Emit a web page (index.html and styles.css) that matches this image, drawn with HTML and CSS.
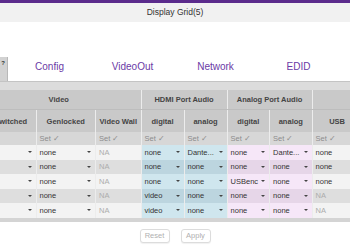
FILE: index.html
```html
<!DOCTYPE html>
<html>
<head>
<meta charset="utf-8">
<link rel="stylesheet" href="styles.css">
</head>
<body>
<div class="topbar"></div>
<div class="titlebar">Display Grid(5)</div>
<div class="gap"></div>
<nav class="tabs">
  <div class="tab active"><span class="q">?</span></div>
  <div class="tab">Config</div>
  <div class="tab">VideoOut</div>
  <div class="tab">Network</div>
  <div class="tab">EDID</div>
</nav>
<div class="tabline"></div>
<div class="grid-wrap">
<table class="grid">
  <colgroup>
    <col class="c-sw"><col class="c-gen"><col class="c-vw"><col class="c-a"><col class="c-a"><col class="c-b"><col class="c-b"><col class="c-usb">
  </colgroup>
  <thead>
    <tr class="h1"><th colspan="3">Video</th><th colspan="2">HDMI Port Audio</th><th colspan="2">Analog Port Audio</th><th></th></tr>
    <tr class="h2"><th class="first">Switched</th><th>Genlocked</th><th>Video Wall</th><th>digital</th><th>analog</th><th>digital</th><th>analog</th><th>USB</th></tr>
    <tr class="set"><td>Set ✓</td><td>Set ✓</td><td>Set ✓</td><td>Set ✓</td><td>Set ✓</td><td>Set ✓</td><td>Set ✓</td><td>Set ✓</td></tr>
  </thead>
  <tbody>
    <tr class="odd"><td class="dd">none</td><td class="dd">none</td><td class="na">NA</td><td class="dd hd">none</td><td class="dd hd">Dante...</td><td class="dd an">none</td><td class="dd an">Dante...</td><td class="dd">none</td></tr>
    <tr class="even"><td class="dd">none</td><td class="dd">none</td><td class="na">NA</td><td class="dd hd">none</td><td class="dd hd">none</td><td class="dd an">none</td><td class="dd an">none</td><td class="dd">none</td></tr>
    <tr class="odd"><td class="dd">none</td><td class="dd">none</td><td class="na">NA</td><td class="dd hd">none</td><td class="dd hd">none</td><td class="dd an">USBenc</td><td class="dd an">none</td><td class="dd">none</td></tr>
    <tr class="even"><td class="dd">none</td><td class="dd">none</td><td class="na">NA</td><td class="dd hd">video</td><td class="dd hd">none</td><td class="dd an">none</td><td class="dd an">none</td><td class="na">NA</td></tr>
    <tr class="odd"><td class="dd">none</td><td class="dd">none</td><td class="na">NA</td><td class="dd hd">video</td><td class="dd hd">none</td><td class="dd an">none</td><td class="dd an">none</td><td class="na">NA</td></tr>
  </tbody>
</table>
</div>
<div class="bottombar"></div>
<div class="buttons">
  <button class="btn" disabled>Reset</button>
  <button class="btn" disabled>Apply</button>
</div>
</body>
</html>
```

FILE: styles.css
```css
html, body {
  margin: 0;
  padding: 0;
  background: #ffffff;
  overflow: hidden;
  font-family: "Liberation Sans", Arial, sans-serif;
  width: 350px;
  height: 250px;
}
.topbar {
  height: 3px;
  background: #5b2b8c;
}
.titlebar {
  height: 19px;
  background: #f1f1f1;
  color: #333;
  font-size: 8.5px;
  line-height: 19px;
  text-align: center;
}
.gap {
  height: 35px;
}
.tabs {
  display: flex;
  height: 24px;
  margin-left: -75px;
}
.tab {
  flex: 0 0 83px;
  color: #6b3aa6;
  font-size: 10px;
  text-align: center;
  line-height: 19px;
}
.tab.active {
  background: #d2d2d2;
  border-right: 1px solid #b8b8b8;
  box-sizing: border-box;
  text-align: right;
  position: relative;
}
.tab .q {
  color: #333;
  font-size: 6px;
  font-weight: bold;
  line-height: 10px;
  position: absolute;
  right: 2px;
  top: 1px;
}
.tabline {
  height: 8px;
  background: #dcdcdc;
  border-top: 1px solid #c4c4c4;
}
.grid-wrap {
  margin-left: -23px;
}
.grid {
  border-collapse: collapse;
  table-layout: fixed;
  width: 385px;
  font-size: 7.5px;
}
.c-sw { width: 59px; }
.c-gen { width: 59.5px; }
.c-vw { width: 45.5px; }
.c-a { width: 43px; }
.c-b { width: 42.5px; }
.c-usb { width: 50px; }
.grid th, .grid td {
  padding: 0 3px;
  white-space: nowrap;
  overflow: hidden;
  border-right: 1px solid #ececec;
}
.grid th {
  background: #c9c9c9;
  color: #444;
  font-weight: bold;
  text-align: center;
}
.grid th.first {
  padding-left: 12px;
}
.h1 th {
  height: 19px;
  border-bottom: 1px solid #bdbdbd;
}
.h2 th {
  height: 22px;
}
.set td {
  height: 13px;
  background: #d7d7d7;
  color: #8d8d8d;
  text-align: left;
}
.grid tbody td {
  height: 14.5px;
  color: #333;
  position: relative;
}
.odd td { background: #f3f3f3; }
.even td { background: #dedede; }
.odd td.hd { background: #cfe6ee; }
.even td.hd { background: #bcd5df; }
.odd td.an { background: #f6e7f8; }
.even td.an { background: #e6d6e8; }
.grid td.na { color: #acacac; }
.dd::after {
  content: "";
  position: absolute;
  right: 4px;
  top: 6px;
  border-left: 2px solid transparent;
  border-right: 2px solid transparent;
  border-top: 2.5px solid #444;
}
.bottombar {
  height: 4px;
  background: #d4d4d4;
}
.buttons {
  display: flex;
  justify-content: center;
  gap: 11px;
  padding-top: 7px;
}
.btn {
  width: 30px;
  height: 14px;
  padding: 0;
  background: #fff;
  border: 1px solid #dcdcdc;
  border-radius: 3px;
  color: #b0b0b0;
  font-family: "Liberation Sans", Arial, sans-serif;
  font-size: 7.5px;
  box-shadow: 0 1px 1px rgba(0,0,0,0.06);
}
```
